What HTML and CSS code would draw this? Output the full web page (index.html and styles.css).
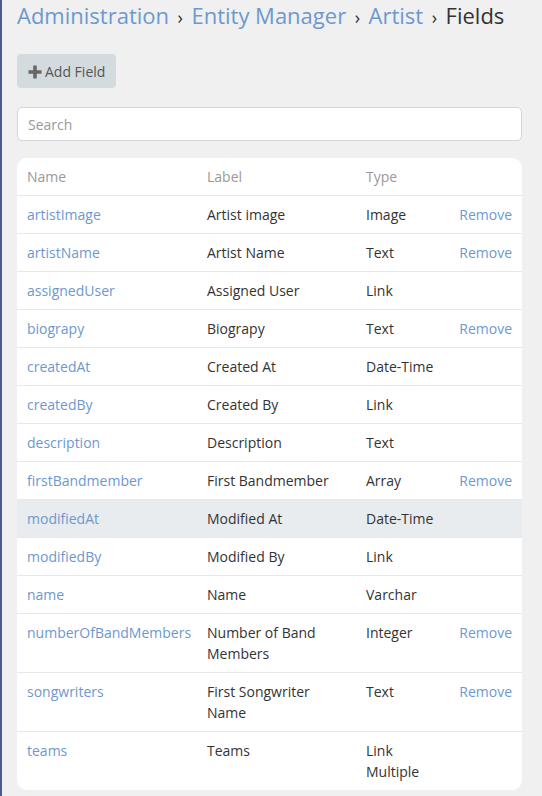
FILE: index.html
```html
<!DOCTYPE html>
<html>
<head>
<meta charset="utf-8">
<link rel="stylesheet" href="styles.css">
</head>
<body>
<div class="page">
  <h1 class="crumbs">
    <a class="crumb-link">Administration</a><span class="sep">›</span><a class="crumb-link">Entity Manager</a><span class="sep">›</span><a class="crumb-link">Artist</a><span class="sep">›</span><span class="crumb-current">Fields</span>
  </h1>
  <div class="actions">
    <button class="btn"><svg class="plus" viewBox="0 0 14 14" width="14" height="14"><rect x="5.25" y="0.5" width="3.5" height="13" /><rect x="0.5" y="5.25" width="13" height="3.5" /></svg>Add Field</button>
  </div>
  <div class="search-wrap">
    <input class="search" type="text" placeholder="Search">
  </div>
  <div class="card">
    <table class="fields">
      <colgroup><col class="c-name"><col class="c-label"><col class="c-type"><col class="c-act"></colgroup>
      <thead>
        <tr><th>Name</th><th>Label</th><th>Type</th><th></th></tr>
      </thead>
      <tbody>
        <tr><td><a class="lnk">artistImage</a></td><td>Artist image</td><td>Image</td><td class="act"><a class="lnk">Remove</a></td></tr>
        <tr><td><a class="lnk">artistName</a></td><td>Artist Name</td><td>Text</td><td class="act"><a class="lnk">Remove</a></td></tr>
        <tr><td><a class="lnk">assignedUser</a></td><td>Assigned User</td><td>Link</td><td class="act"></td></tr>
        <tr><td><a class="lnk">biograpy</a></td><td>Biograpy</td><td>Text</td><td class="act"><a class="lnk">Remove</a></td></tr>
        <tr><td><a class="lnk">createdAt</a></td><td>Created At</td><td>Date-Time</td><td class="act"></td></tr>
        <tr><td><a class="lnk">createdBy</a></td><td>Created By</td><td>Link</td><td class="act"></td></tr>
        <tr><td><a class="lnk">description</a></td><td>Description</td><td>Text</td><td class="act"></td></tr>
        <tr><td><a class="lnk">firstBandmember</a></td><td>First Bandmember</td><td>Array</td><td class="act"><a class="lnk">Remove</a></td></tr>
        <tr class="hover"><td><a class="lnk">modifiedAt</a></td><td>Modified At</td><td>Date-Time</td><td class="act"></td></tr>
        <tr><td><a class="lnk">modifiedBy</a></td><td>Modified By</td><td>Link</td><td class="act"></td></tr>
        <tr><td><a class="lnk">name</a></td><td>Name</td><td>Varchar</td><td class="act"></td></tr>
        <tr><td><a class="lnk">numberOfBandMembers</a></td><td>Number of Band Members</td><td>Integer</td><td class="act"><a class="lnk">Remove</a></td></tr>
        <tr><td><a class="lnk">songwriters</a></td><td>First Songwriter Name</td><td>Text</td><td class="act"><a class="lnk">Remove</a></td></tr>
        <tr class="last"><td><a class="lnk">teams</a></td><td>Teams</td><td>Link Multiple</td><td class="act"></td></tr>
      </tbody>
    </table>
  </div>
</div>
</body>
</html>
```
FILE: styles.css
```css
html, body {
  margin: 0;
  padding: 0;
  background: #f0f0f0;
}
body {
  font-family: "Open Sans", "Liberation Sans", sans-serif;
  font-size: 14px;
  color: #333;
  border-left: 2px solid #4a5d8c;
  min-height: 796px;
  box-sizing: border-box;
  overflow: hidden;
}
.page {
  padding: 0 20px 0 15px;
}
.crumbs {
  margin: 0;
  padding: 0;
  font-size: 22px;
  font-weight: 400;
  line-height: 30px;
  height: 36px;
}
.crumb-link {
  color: #6d98cf;
}
.crumb-current {
  color: #333;
}
.sep {
  font-size: 18px;
  color: #333;
  margin: 0 8.5px;
}
.actions {
  margin-top: 18px;
  display: flex;
}
.btn {
  display: flex;
  align-items: center;
  gap: 3px;
  height: 34px;
  padding: 0 11px;
  border: none;
  border-radius: 4px;
  background: #d3dbdf;
  color: #555;
  font-family: inherit;
  font-size: 14px;
}
.plus {
  fill: #666;
  margin-top: 1px;
}
.search-wrap {
  margin-top: 19px;
}
.search {
  display: block;
  width: 100%;
  box-sizing: border-box;
  height: 34px;
  border: 1px solid #d5d5d5;
  border-radius: 5px;
  padding: 0 10px;
  font-family: inherit;
  font-size: 14px;
  background: #fff;
  color: #333;
  outline: none;
}
.search::placeholder {
  color: #999;
}
.card {
  margin-top: 17px;
  background: #fff;
  border-radius: 10px;
  overflow: hidden;
}
.fields {
  width: 100%;
  border-collapse: collapse;
  table-layout: fixed;
}
.c-name { width: 180px; }
.c-label { width: 159px; }
.c-type { width: 93px; }
.c-act { width: 73px; }
.fields th {
  text-align: left;
  font-weight: 400;
  color: #999;
  padding: 8px 10px;
  line-height: 21px;
  border-bottom: 1px solid #e8e8e8;
}
.fields td {
  padding: 8px 10px;
  line-height: 21px;
  vertical-align: top;
  border-bottom: 1px solid #e8e8e8;
}
.fields tr.last td {
  border-bottom: none;
}
.fields tr.hover td {
  background: #e8ecee;
}
.fields td.act {
  text-align: right;
}
.lnk {
  color: #6d98cf;
}
```
